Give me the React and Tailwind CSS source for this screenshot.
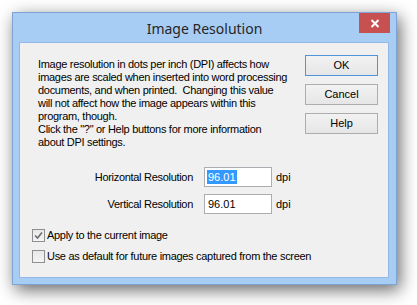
const sans = { fontFamily: '"Liberation Sans", Arial, sans-serif' };

const lines = [
  'Image resolution in dots per inch (DPI) affects how',
  'images are scaled when inserted into word processing',
  'documents, and when printed.\u00a0 Changing this value',
  'will not affect how the image appears within this',
  'program, though.',
  'Click the "?" or Help buttons for more information',
  'about DPI settings.',
];

const Button = ({ label, primary }) => (
  <button
    className={`w-[73px] h-[21px] text-[11px] text-black bg-gradient-to-b from-[#f2f2f2] to-[#e6e6e6] border ${
      primary ? 'border-[#4f95db]' : 'border-[#adadad]'
    }`}
  >
    {label}
  </button>
);

const ResRow = ({ label, selected }) => (
  <div className="flex items-center h-[20px]">
    <span className="w-[173px] text-right text-[11px] tracking-[-0.3px] text-black">{label}</span>
    <div className="ml-[11px] w-[68px] h-[20px] bg-white border border-[#abadb3] flex items-center pl-[2px]">
      <span className={`text-[11px] leading-[14px] px-[1px] ${selected ? 'bg-[#3399ff] text-white' : 'text-black'}`}>
        96.01
      </span>
    </div>
    <span className="ml-[4px] text-[11px] text-black">dpi</span>
  </div>
);

const Check = ({ checked, label }) => (
  <div className="flex items-center h-[13px]">
    <div className="w-[13px] h-[13px] border border-[#8f8f8f] bg-gradient-to-b from-[#e8e8e8] to-[#f4f4f4] flex items-center justify-center">
      {checked && (
        <svg width="9" height="9" viewBox="0 0 9 9">
          <path d="M1 4.5 L3.5 7 L8 1.5" fill="none" stroke="#6d6d6d" strokeWidth="1.6" />
        </svg>
      )}
    </div>
    <span className="ml-[2px] text-[11px] tracking-[-0.3px] text-black">{label}</span>
  </div>
);

export default function App() {
  return (
    <div className="w-[417px] h-[305px] bg-white pt-[12px] pl-[12px] overflow-hidden" style={sans}>
      <div className="w-[385px] h-[273px] border border-[#7ea3d3] bg-[#a8cdf5] shadow-[3px_5px_16px_rgba(0,0,0,0.6)]">
        <div className="relative h-[29px] flex items-center justify-center">
          <span
            className="text-[14px] text-[#262626] mt-[2px]"
            style={{ fontFamily: '"Noto Sans", "Open Sans", sans-serif' }}
          >
            Image Resolution
          </span>
          <div className="absolute top-0 right-[6px] w-[31px] h-[20px] bg-[#c75050] flex items-center justify-center">
            <svg width="10" height="9" viewBox="0 0 10 9">
              <path d="M1.5 1 L8.5 8 M8.5 1 L1.5 8" stroke="white" strokeWidth="2" />
            </svg>
          </div>
        </div>
        <div className="ml-[6px] w-[370px] h-[236px] bg-[#f0f0f0] border border-[#93b8e3] flex flex-col">
          <div className="flex">
            <div className="pl-[18px] pt-[15px] text-[11px] leading-[13px] tracking-[-0.3px] text-black">
              {lines.map((l, i) => (
                <div key={i} className="whitespace-pre">{l}</div>
              ))}
            </div>
            <div className="ml-auto mr-[10px] mt-[12px] flex flex-col gap-[8px]">
              <Button label="OK" primary />
              <Button label="Cancel" />
              <Button label="Help" />
            </div>
          </div>
          <div className="mt-[18px] flex flex-col gap-[7px]">
            <ResRow label="Horizontal Resolution" selected />
            <ResRow label="Vertical Resolution" />
          </div>
          <div className="mt-[15px] ml-[12px] flex flex-col gap-[8px]">
            <Check checked label="Apply to the current image" />
            <Check label="Use as default for future images captured from the screen" />
          </div>
        </div>
      </div>
    </div>
  );
}
